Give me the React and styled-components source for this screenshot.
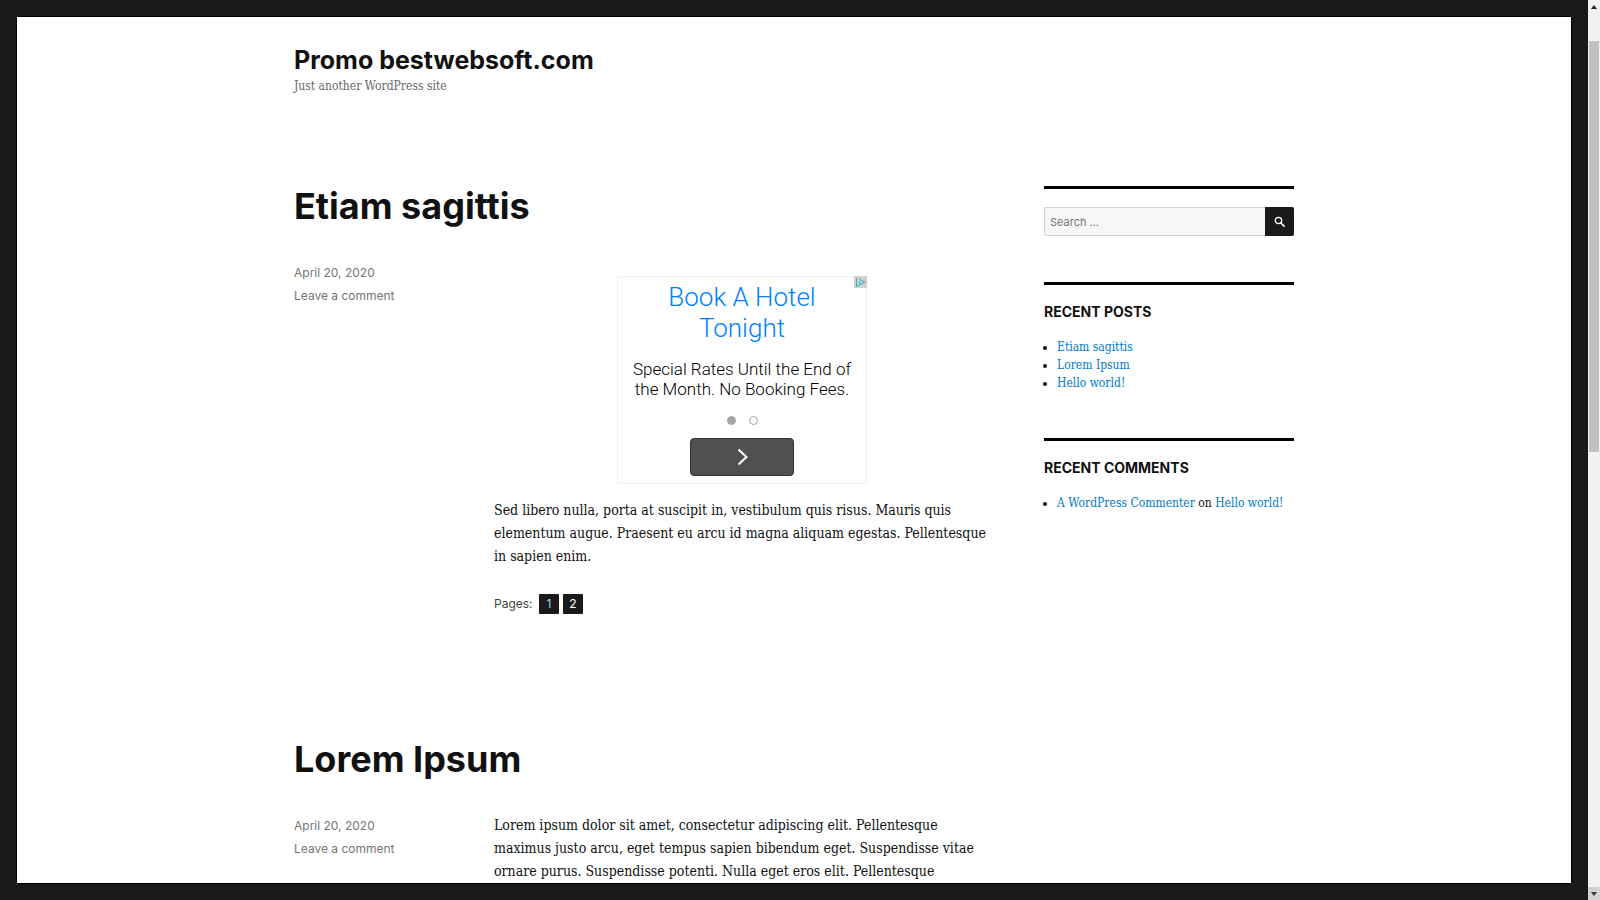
import React from "react";
import styled, { createGlobalStyle } from "styled-components";

const sans = `Inter, "Open Sans", sans-serif`;
const serif = `"DejaVu Serif Condensed", "DejaVu Serif", serif`;

const GlobalStyle = createGlobalStyle`
  * {
    box-sizing: border-box;
  }

  body {
    margin: 0;
    background: #1a1a1a;
    color: #111;
    font-family: ${serif};
  }

  h1, h2, h3, p, ul {
    margin: 0;
    padding: 0;
  }

  a {
    color: inherit;
    text-decoration: none;
  }
`;

const Window = styled.div`
  display: flex;
  height: 100vh;
  overflow: hidden;
`;

const Frame = styled.div`
  flex: 1;
  min-width: 0;
  padding: 16px;
  background: #1a1a1a;
`;

const Site = styled.div`
  height: 100%;
  overflow: hidden;
  border: 1px solid #000;
  background: #fff;
`;

const Inner = styled.div`
  max-width: 1000px;
  margin: 0 auto;
  padding-top: 26px;
`;

const Header = styled.header`
  margin-bottom: 91px;
`;

const SiteTitle = styled.h1`
  font-family: ${sans};
  font-size: 25px;
  font-weight: 700;
  line-height: 34px;
`;

const Tagline = styled.p`
  color: #686868;
  font-size: 12px;
  line-height: 18px;
`;

const Content = styled.div`
  display: grid;
  grid-template-columns: minmax(0, 1fr) 250px;
  gap: 54px;
`;

const Article = styled.article`
  margin-bottom: 125px;
`;

const EntryTitle = styled.h2`
  margin-bottom: 34px;
  font-family: ${sans};
  font-size: 36px;
  font-weight: 700;
  line-height: 41px;
`;

const Entry = styled.div`
  display: grid;
  grid-template-columns: 200px minmax(0, 1fr);
`;

const Meta = styled.div`
  display: flex;
  flex-direction: column;
  align-items: flex-start;
  color: #757575;
  font-family: ${sans};
  font-size: 12px;
  line-height: 23px;
`;

const Text = styled.p`
  font-size: 14px;
  line-height: 23px;
  white-space: nowrap;
`;

const Pages = styled.nav`
  display: flex;
  align-items: center;
  gap: 4px;
  margin-top: 26px;
  font-family: ${sans};
  font-size: 12px;
  line-height: 20px;
`;

const PagesLabel = styled.span`
  width: 41px;
  color: #444;
`;

const PageLink = styled.a`
  width: 20px;
  border-radius: 1px;
  background: #1a1a1a;
  color: ${(props) => (props.$current ? "#9fd8f5" : "#fff")};
  text-align: center;
`;

const Ad = styled.section`
  position: relative;
  display: flex;
  flex-direction: column;
  align-items: center;
  width: 250px;
  height: 208px;
  margin: 15px auto;
  padding-top: 5px;
  border: 1px solid #f0f0f0;
  font-family: Roboto, sans-serif;
  font-weight: 300;
  text-align: center;
`;

const AdTitle = styled.h3`
  color: #0080ff;
  font-size: 26px;
  font-weight: 300;
  line-height: 31px;
`;

const AdText = styled.p`
  margin-top: 15px;
  color: #000;
  font-size: 17px;
  line-height: 20px;
`;

const Dots = styled.div`
  display: flex;
  gap: 13px;
  margin: 17px 0 13px;
`;

const Dot = styled.span`
  width: 9px;
  height: 9px;
  border: 1px solid #a6a6a6;
  border-radius: 50%;
  background: ${(props) => (props.$active ? "#a6a6a6" : "#fff")};
`;

const AdButton = styled.button`
  display: flex;
  align-items: center;
  justify-content: center;
  width: 104px;
  height: 38px;
  padding: 0;
  border: 1px solid #333;
  border-radius: 4px;
  background: #505050;
`;

const AdBadge = styled.svg`
  position: absolute;
  top: -1px;
  right: -1px;
  background: #cfcfcf;
`;

const Sidebar = styled.aside`
  display: flex;
  flex-direction: column;
  gap: 46px;
`;

const Widget = styled.section`
  padding-top: 18px;
  border-top: 3px solid #000;
`;

const SearchForm = styled.form`
  display: flex;
  height: 29px;
`;

const SearchField = styled.input`
  flex: 1;
  min-width: 0;
  padding: 0 5px;
  border: 1px solid #d1d1d1;
  border-right: 0;
  border-radius: 2px 0 0 2px;
  background: #f7f7f7;
  font-family: ${sans};
  font-size: 11px;

  &::placeholder {
    color: #757575;
    opacity: 1;
  }
`;

const SearchButton = styled.button`
  display: flex;
  align-items: center;
  justify-content: center;
  width: 29px;
  padding: 0;
  border: 0;
  border-radius: 0 2px 2px 0;
  background: #1a1a1a;
`;

const WidgetTitle = styled.h2`
  margin-bottom: 17px;
  font-family: ${sans};
  font-size: 14px;
  font-weight: 700;
  line-height: 18px;
  text-transform: uppercase;
`;

const List = styled.ul`
  padding-left: 13px;
  font-size: 12px;
  line-height: 18px;
  white-space: nowrap;

  a {
    color: #007acc;
  }
`;

const Scrollbar = styled.div`
  display: flex;
  flex-direction: column;
  width: 12px;
  background: #f1f1f1;
`;

const ScrollButton = styled.button`
  display: flex;
  align-items: center;
  justify-content: center;
  height: 13px;
  padding: 0;
  border: 0;
  background: ${(props) => (props.$hover ? "#d2d2d2" : "#f1f1f1")};
`;

const Track = styled.div`
  flex: 1;
  display: grid;
  grid-template-rows: 28fr 411fr 435fr;
  padding: 0 1px;
`;

const Thumb = styled.div`
  grid-row: 2;
  background: #c1c1c1;
`;

const recentPosts = ["Etiam sagittis", "Lorem Ipsum", "Hello world!"];

function Post({ title, children }) {
  return (
    <Article>
      <EntryTitle>
        <a href="#post">{title}</a>
      </EntryTitle>
      <Entry>
        <Meta>
          <a href="#date">April 20, 2020</a>
          <a href="#respond">Leave a comment</a>
        </Meta>
        <div>{children}</div>
      </Entry>
    </Article>
  );
}

function HotelAd() {
  return (
    <Ad>
      <AdBadge width="13" height="12" viewBox="0 0 13 12" fill="none" stroke="#2fb5c8">
        <path d="M2.5 1.8v8.6L10.8 6.2 5 3M5.8 5.2v2.6" />
      </AdBadge>
      <AdTitle>
        Book A Hotel
        <br />
        Tonight
      </AdTitle>
      <AdText>
        Special Rates Until the End of
        <br />
        the Month. No Booking Fees.
      </AdText>
      <Dots>
        <Dot $active />
        <Dot />
      </Dots>
      <AdButton type="button" aria-label="Next">
        <svg width="12" height="18" viewBox="0 0 12 18" fill="none" stroke="#fff" strokeWidth="2">
          <path d="M2.5 1.5 10.5 9l-8 7.5" />
        </svg>
      </AdButton>
    </Ad>
  );
}

export default function App() {
  return (
    <Window>
      <GlobalStyle />
      <Frame>
        <Site>
          <Inner>
            <Header>
              <SiteTitle>
                <a href="#home">Promo bestwebsoft.com</a>
              </SiteTitle>
              <Tagline>Just another WordPress site</Tagline>
            </Header>

            <Content>
              <main>
                <Post title="Etiam sagittis">
                  <HotelAd />
                  <Text>
                    Sed libero nulla, porta at suscipit in, vestibulum quis risus. Mauris quis
                    <br />
                    elementum augue. Praesent eu arcu id magna aliquam egestas. Pellentesque
                    <br />
                    in sapien enim.
                  </Text>
                  <Pages>
                    <PagesLabel>Pages:</PagesLabel>
                    <PageLink href="#page-1" $current>
                      1
                    </PageLink>
                    <PageLink href="#page-2">2</PageLink>
                  </Pages>
                </Post>

                <Post title="Lorem Ipsum">
                  <Text>
                    Lorem ipsum dolor sit amet, consectetur adipiscing elit. Pellentesque
                    <br />
                    maximus justo arcu, eget tempus sapien bibendum eget. Suspendisse vitae
                    <br />
                    ornare purus. Suspendisse potenti. Nulla eget eros elit. Pellentesque
                  </Text>
                </Post>
              </main>

              <Sidebar>
                <Widget>
                  <SearchForm role="search">
                    <SearchField type="search" placeholder="Search …" aria-label="Search for:" />
                    <SearchButton type="button" aria-label="Search">
                      <svg width="12" height="12" viewBox="0 0 12 12" fill="none" stroke="#fff">
                        <circle cx="4.5" cy="4.5" r="3.2" strokeWidth="1.3" />
                        <path d="M7 7l3.6 3.6" strokeWidth="1.6" />
                      </svg>
                    </SearchButton>
                  </SearchForm>
                </Widget>

                <Widget>
                  <WidgetTitle>Recent Posts</WidgetTitle>
                  <List>
                    {recentPosts.map((post) => (
                      <li key={post}>
                        <a href="#post">{post}</a>
                      </li>
                    ))}
                  </List>
                </Widget>

                <Widget>
                  <WidgetTitle>Recent Comments</WidgetTitle>
                  <List>
                    <li>
                      <a href="#author">A WordPress Commenter</a> on <a href="#post">Hello world!</a>
                    </li>
                  </List>
                </Widget>
              </Sidebar>
            </Content>
          </Inner>
        </Site>
      </Frame>

      <Scrollbar>
        <ScrollButton type="button" aria-label="Scroll up">
          <svg width="6" height="4" viewBox="0 0 6 4">
            <path d="M0 4 3 0l3 4z" fill="#222" />
          </svg>
        </ScrollButton>
        <Track>
          <Thumb />
        </Track>
        <ScrollButton type="button" aria-label="Scroll down" $hover>
          <svg width="6" height="4" viewBox="0 0 6 4">
            <path d="M0 0l3 4 3-4z" fill="#333" />
          </svg>
        </ScrollButton>
      </Scrollbar>
    </Window>
  );
}
